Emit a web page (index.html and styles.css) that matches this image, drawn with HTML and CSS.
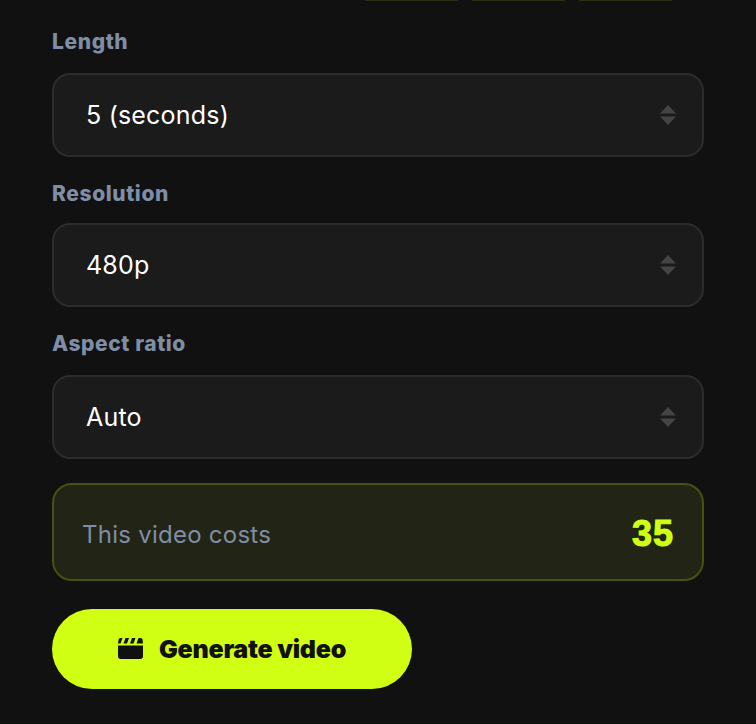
FILE: index.html
```html
<!DOCTYPE html>
<html lang="en">
<head>
    <meta charset="UTF-8">
    <meta name="viewport" content="width=device-width, initial-scale=1.0">
    <title>Generate video</title>
    <link rel="stylesheet" href="styles.css">
</head>
<body>
    <div class="chip-row">
        <span class="chip"></span>
        <span class="chip"></span>
        <span class="chip"></span>
    </div>
    <form class="video-form">
        <div class="field field-length">
            <label class="field-label">Length</label>
            <div class="select-box">
                <span>5 (seconds)</span>
                <svg class="select-arrows" width="16" height="20" viewBox="0 0 16 20"><path d="M8 0l8 8.500H0zM0 11.500h16L8 20z"/></svg>
            </div>
        </div>
        <div class="field field-resolution">
            <label class="field-label">Resolution</label>
            <div class="select-box">
                <span>480p</span>
                <svg class="select-arrows" width="16" height="20" viewBox="0 0 16 20"><path d="M8 0l8 8.500H0zM0 11.500h16L8 20z"/></svg>
            </div>
        </div>
        <div class="field field-aspect">
            <label class="field-label">Aspect ratio</label>
            <div class="select-box">
                <span>Auto</span>
                <svg class="select-arrows" width="16" height="20" viewBox="0 0 16 20"><path d="M8 0l8 8.500H0zM0 11.500h16L8 20z"/></svg>
            </div>
        </div>
        <div class="cost-box">
            <span class="cost-label">This video costs</span>
            <span class="cost-value">35</span>
        </div>
        <button type="button" class="generate-btn">
            <svg class="clapper" width="25" height="21" viewBox="0 0 25 21"><path d="M0 5.500L.6 1.800C.8.700 1.600 0 2.800 0H4.500L2.500 5.500zM5.500 5.500L7.500 0H11L9 5.500zM12 5.500L14 0H17.500L15.500 5.500zM18.500 5.500L20.500 0H22C23.500 0 24.400.800 24.600 1.800L25 5.500zM0 7.500H25V18.500C25 19.900 23.900 21 22.500 21H2.500C1.100 21 0 19.900 0 18.500z"/></svg>
            Generate video
        </button>
    </form>
</body>
</html>
```

FILE: styles.css
```css
* {
    box-sizing: border-box;
}

body {
    margin: 0;
    padding: 0 52px;
    background-color: #111111;
    font-family: "Inter", "Liberation Sans", sans-serif;
    color: #ffffff;
}

.chip-row {
    display: flex;
    justify-content: flex-end;
    gap: 14px;
    height: 1px;
    padding-right: 32px;
}

.chip {
    width: 93px;
    height: 1px;
    background-color: #2a3014;
    border-radius: 0 0 4px 4px;
}

.field-label {
    display: block;
    font-size: 21px;
    font-weight: 800;
    line-height: 30px;
    letter-spacing: 0.6px;
    color: #7f8ea6;
}

.field-length {
    padding-top: 26px;
}

.field-resolution {
    padding-top: 22px;
}

.field-resolution .select-box {
    margin-top: 14px;
}

.field-aspect {
    padding-top: 22px;
}

.select-box {
    display: flex;
    justify-content: space-between;
    align-items: center;
    height: 84px;
    margin-top: 16px;
    padding: 0 26px 0 32px;
    background-color: #1b1b1b;
    border: 2px solid #2c2c2f;
    border-radius: 18px;
    font-size: 25px;
    letter-spacing: 0.2px;
}

.select-arrows {
    fill: #444444;
}

.cost-box {
    display: flex;
    justify-content: space-between;
    align-items: center;
    height: 98px;
    margin-top: 24px;
    padding: 4px 28px 0 28px;
    background-color: #222416;
    border: 2px solid #4a500f;
    border-radius: 20px;
}

.cost-label {
    font-size: 24px;
    letter-spacing: 0.25px;
    color: #7f8ea6;
}

.cost-value {
    font-family: "Liberation Sans", sans-serif;
    font-size: 36px;
    font-weight: 700;
    letter-spacing: 1px;
    color: #d0ff14;
    -webkit-text-stroke: 1px #d0ff14;
}

.generate-btn {
    display: flex;
    justify-content: center;
    align-items: center;
    gap: 16px;
    width: 360px;
    height: 80px;
    margin-top: 28px;
    padding-bottom: 2px;
    border: none;
    border-radius: 40px;
    background-color: #d0ff14;
    font-family: inherit;
    font-size: 25px;
    font-weight: 900;
    letter-spacing: -0.25px;
    color: #111111;
}

.clapper {
    fill: #111111;
}
```
